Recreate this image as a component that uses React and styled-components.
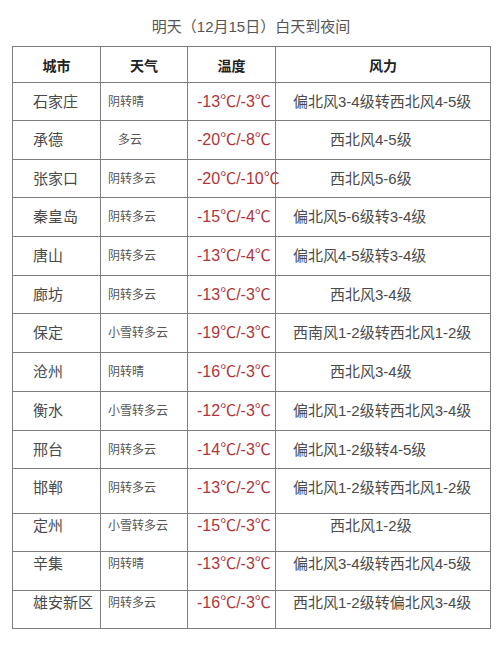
import React from "react";
import styled, { createGlobalStyle } from "styled-components";

const GlobalStyle = createGlobalStyle`
  html, body {
    margin: 0;
    padding: 0;
    background: #fff;
  }
  body {
    font-family: "Liberation Sans", "Noto Sans CJK SC", sans-serif;
    color: #4a4a4a;
  }
`;

const Page = styled.div`
  width: 500px;
  height: 646px;
  padding: 17px 0 0 12px;
  box-sizing: border-box;
`;

const Title = styled.h1`
  margin: 0 0 9px;
  width: 478px;
  text-align: center;
  font-size: 15px;
  line-height: 20px;
  font-weight: normal;
  color: #555;
`;

const Table = styled.table`
  width: 478px;
  border-collapse: collapse;
  table-layout: fixed;
`;

const Head = styled.th`
  height: 35px;
  padding: 0;
  border: 1px solid #7d7d7d;
  font-size: 14px;
  font-weight: bold;
  color: #222;
  text-align: center;
`;

const Cell = styled.td`
  height: ${(p) => p.$h}px;
  padding: ${(p) => p.$top}px 0 0 ${(p) => p.$left || 0}px;
  box-sizing: border-box;
  border: 1px solid #7d7d7d;
  vertical-align: ${(p) => (p.$top ? "top" : "middle")};
  line-height: 20px;
  white-space: nowrap;
  overflow: visible;
`;

const City = styled(Cell)`
  font-size: 15px;
  color: #4a4a4a;
`;

const Weather = styled(Cell)`
  font-size: 12px;
  color: #555;
`;

const Temp = styled(Cell)`
  font-size: 16px;
  color: #b0353a;
  position: relative;
  z-index: 1;
`;

const Wind = styled(Cell)`
  font-size: 15px;
  color: #4a4a4a;
`;

const rows = [
  ["石家庄", "阴转晴", "-13℃/-3℃", "偏北风3-4级转西北风4-5级"],
  ["承德", "多云", "-20℃/-8℃", "西北风4-5级", true, true],
  ["张家口", "阴转多云", "-20℃/-10℃", "西北风5-6级", false, true],
  ["秦皇岛", "阴转多云", "-15℃/-4℃", "偏北风5-6级转3-4级"],
  ["唐山", "阴转多云", "-13℃/-4℃", "偏北风4-5级转3-4级"],
  ["廊坊", "阴转多云", "-13℃/-3℃", "西北风3-4级", false, true],
  ["保定", "小雪转多云", "-19℃/-3℃", "西南风1-2级转西北风1-2级"],
  ["沧州", "阴转晴", "-16℃/-3℃", "西北风3-4级", false, true],
  ["衡水", "小雪转多云", "-12℃/-3℃", "偏北风1-2级转西北风3-4级"],
  ["邢台", "阴转多云", "-14℃/-3℃", "偏北风1-2级转4-5级"],
  ["邯郸", "阴转多云", "-13℃/-2℃", "偏北风1-2级转西北风1-2级"],
  ["定州", "小雪转多云", "-15℃/-3℃", "西北风1-2级", false, true],
  ["辛集", "阴转晴", "-13℃/-3℃", "偏北风3-4级转西北风4-5级"],
  ["雄安新区", "阴转多云", "-16℃/-3℃", "西北风1-2级转偏北风3-4级"],
];

const heights = [38, 39, 38, 39, 39, 38, 39, 39, 39, 38, 45, 38, 39, 38];
const tops = [0, 0, 0, 0, 0, 0, 0, 0, 0, 0, 9, 2, 2, 2];

export default function App() {
  return (
    <>
      <GlobalStyle />
      <Page>
        <Title>明天（12月15日）白天到夜间</Title>
        <Table>
          <colgroup>
            <col style={{ width: 88 }} />
            <col style={{ width: 87 }} />
            <col style={{ width: 88 }} />
            <col style={{ width: 215 }} />
          </colgroup>
          <thead>
            <tr>
              <Head>城市</Head>
              <Head>天气</Head>
              <Head>温度</Head>
              <Head>风力</Head>
            </tr>
          </thead>
          <tbody>
            {rows.map(([city, weather, temp, wind, wideWeather, shortWind], i) => (
              <tr key={city}>
                <City $h={heights[i]} $top={tops[i]} $left={20}>{city}</City>
                <Weather $h={heights[i]} $top={tops[i]} $left={wideWeather ? 17 : 7}>
                  {weather}
                </Weather>
                <Temp $h={heights[i]} $top={tops[i]} $left={9}>{temp}</Temp>
                <Wind $h={heights[i]} $top={tops[i]} $left={shortWind ? 54 : 17}>
                  {wind}
                </Wind>
              </tr>
            ))}
          </tbody>
        </Table>
      </Page>
    </>
  );
}
